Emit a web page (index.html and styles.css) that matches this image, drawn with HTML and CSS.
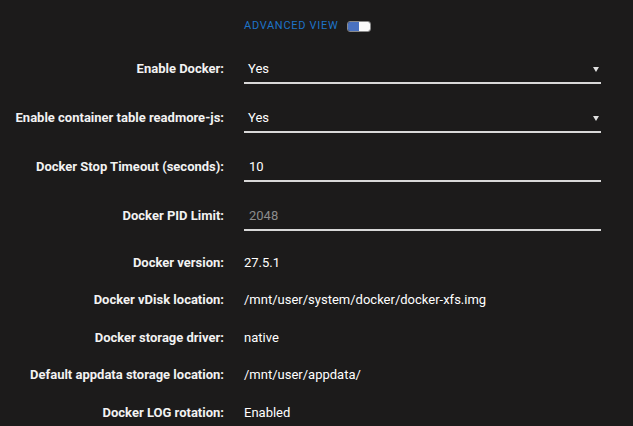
FILE: index.html
```html
<!DOCTYPE html>
<html lang="en">
<head>
  <meta charset="UTF-8" />
  <title>Docker Settings</title>
  <link rel="stylesheet" href="styles.css">
</head>
<body>

  <div class="toolbar">
    <span class="adv-label">ADVANCED VIEW</span>
    <span class="switch"><span class="switch-on"></span><span class="switch-off"></span></span>
  </div>

  <form class="settings">
    <label class="name field-name">Enable Docker:</label>
    <div class="field">
      <div class="select"><span>Yes</span><span class="caret"></span></div>
    </div>

    <label class="name field-name">Enable container table readmore-js:</label>
    <div class="field">
      <div class="select"><span>Yes</span><span class="caret"></span></div>
    </div>

    <label class="name field-name">Docker Stop Timeout (seconds):</label>
    <div class="field">
      <div class="input">10</div>
    </div>

    <label class="name field-name">Docker PID Limit:</label>
    <div class="field">
      <div class="input placeholder">2048</div>
    </div>

    <label class="name info first">Docker version:</label>
    <div class="value first">27.5.1</div>

    <label class="name info">Docker vDisk location:</label>
    <div class="value">/mnt/user/system/docker/docker-xfs.img</div>

    <label class="name info">Docker storage driver:</label>
    <div class="value">native</div>

    <label class="name info">Default appdata storage location:</label>
    <div class="value">/mnt/user/appdata/</div>

    <label class="name info">Docker LOG rotation:</label>
    <div class="value">Enabled</div>
  </form>

</body>
</html>
```

FILE: styles.css
```css
body {
  margin: 0;
  background: #1c1b1b;
  color: #f2f2f2;
  font-family: 'Roboto', 'Noto Sans', sans-serif;
  font-size: 13px;
  line-height: 16px;
}

.toolbar {
  display: flex;
  align-items: center;
  gap: 9px;
  padding: 18px 0 0 244px;
  height: 16px;
}

.adv-label {
  color: #1e73c8;
  font-size: 11px;
  letter-spacing: 0.7px;
}

.switch {
  display: flex;
  width: 22px;
  height: 9px;
  border: 1px solid #8a8a8a;
  border-radius: 3px;
  overflow: hidden;
}

.switch-on {
  flex: 1;
  background: #4a72c0;
}

.switch-off {
  flex: 1;
  background: #fafafa;
}

.settings {
  display: grid;
  grid-template-columns: 224px 357px;
  column-gap: 20px;
  align-items: start;
  padding-top: 1px;
}

.name {
  text-align: right;
  font-weight: 700;
  color: #f2f2f2;
}

.field-name {
  padding-top: 26px;
}

.field {
  padding-top: 26px;
}

.select,
.input {
  display: flex;
  justify-content: space-between;
  align-items: center;
  padding: 0 2px 5px 4px;
  border-bottom: 2px solid #d8d8d8;
  color: #fff;
}

.input {
  padding-left: 5px;
}

.placeholder {
  color: #8c8c8c;
}

.caret {
  width: 0;
  height: 0;
  border-left: 3px solid transparent;
  border-right: 3px solid transparent;
  border-top: 5px solid #e0e0e0;
}

.info,
.value {
  padding-top: 21.5px;
}

.info.first,
.value.first {
  padding-top: 23.5px;
}

.value {
  color: #fff;
}
```
